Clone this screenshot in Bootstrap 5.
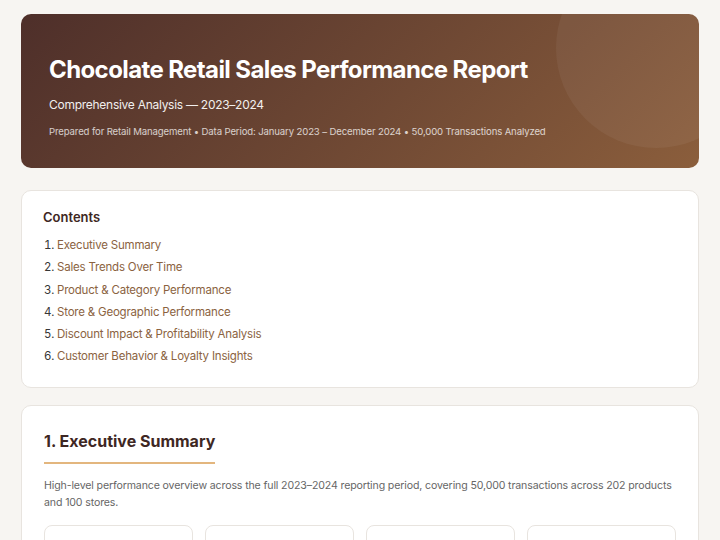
<!DOCTYPE html>
<html lang="en">
<head>
  <meta charset="UTF-8">
  <meta name="viewport" content="width=device-width, initial-scale=1">
  <title>Chocolate Retail Sales Performance Report</title>
  <link href="https://cdn.jsdelivr.net/npm/bootstrap@5.3.3/dist/css/bootstrap.min.css" rel="stylesheet">
  <style>
    html, body {
      height: 540px;
      overflow: hidden;
    }

    body {
      background: #f7f5f2;
      font-family: Inter, "Liberation Sans", sans-serif;
      color: #2c2c2c;
    }

    .page {
      padding: 14px 21px;
    }

    .hero {
      position: relative;
      overflow: hidden;
      height: 154px;
      padding: 39px 28px 0;
      margin-bottom: 22px;
      border-radius: 10px;
      background: linear-gradient(135deg, #4e2f2a, #8b5e3c);
      color: #fff;
    }

    .hero::after {
      content: "";
      position: absolute;
      top: -66px;
      right: -57px;
      width: 200px;
      height: 200px;
      border-radius: 50%;
      background: rgba(255, 255, 255, 0.05);
    }

    .hero h1 {
      font-size: 24px;
      font-weight: 700;
      line-height: 33px;
      letter-spacing: -0.6px;
      margin-bottom: 9px;
    }

    .hero .subtitle {
      font-size: 12px;
      line-height: 20px;
      letter-spacing: -0.27px;
      margin-bottom: 9px;
      opacity: 0.92;
    }

    .hero .meta {
      font-size: 9.6px;
      line-height: 16px;
      letter-spacing: -0.14px;
      opacity: 0.75;
    }

    .panel {
      background: #fff;
      border: 1px solid #e8e4df;
      border-radius: 10px;
    }

    .toc {
      height: 198px;
      padding: 18px 21px;
      margin-bottom: 17px;
    }

    .toc h2 {
      font-size: 13px;
      font-weight: 600;
      line-height: 17px;
      color: #3e2723;
      margin-bottom: 8px;
    }

    .toc ol {
      margin: 0;
      padding-left: 14px;
      font-size: 11.5px;
      line-height: 22.3px;
      letter-spacing: -0.2px;
      opacity: 0.95;
    }

    .toc a {
      color: #855a36;
      text-decoration: none;
    }

    .section {
      padding: 22px;
      height: 300px;
    }

    .section h2 {
      display: inline-block;
      font-size: 16px;
      font-weight: 700;
      line-height: 26px;
      color: #3e2723;
      padding-bottom: 8px;
      margin-bottom: 13px;
      border-bottom: 2px solid #e3b67e;
    }

    .section p {
      font-size: 10.6px;
      line-height: 17px;
      letter-spacing: -0.135px;
      color: #555;
      margin-bottom: 14px;
      opacity: 0.9;
    }

    .metrics {
      display: grid;
      grid-template-columns: repeat(4, 1fr);
      gap: 12px;
    }

    .metric {
      height: 100px;
      border: 1px solid #e8e4df;
      border-radius: 8px;
    }
  </style>
</head>
<body>

  <div class="page">
    <header class="hero">
      <h1>Chocolate Retail Sales Performance Report</h1>
      <div class="subtitle">Comprehensive Analysis — 2023–2024</div>
      <div class="meta">Prepared for Retail Management • Data Period: January 2023 – December 2024 • 50,000 Transactions Analyzed</div>
    </header>

    <nav class="panel toc">
      <h2>Contents</h2>
      <ol>
        <li><a href="#summary">Executive Summary</a></li>
        <li><a href="#trends">Sales Trends Over Time</a></li>
        <li><a href="#product">Product &amp; Category Performance</a></li>
        <li><a href="#store">Store &amp; Geographic Performance</a></li>
        <li><a href="#discount">Discount Impact &amp; Profitability Analysis</a></li>
        <li><a href="#customer">Customer Behavior &amp; Loyalty Insights</a></li>
      </ol>
    </nav>

    <section class="panel section" id="summary">
      <h2>1. Executive Summary</h2>
      <p>High-level performance overview across the full 2023–2024 reporting period, covering 50,000 transactions across 202 products and 100 stores.</p>
      <div class="metrics">
        <div class="metric"></div>
        <div class="metric"></div>
        <div class="metric"></div>
        <div class="metric"></div>
      </div>
    </section>
  </div>

  <script src="https://cdn.jsdelivr.net/npm/bootstrap@5.3.3/dist/js/bootstrap.bundle.min.js"></script>
</body>
</html>
